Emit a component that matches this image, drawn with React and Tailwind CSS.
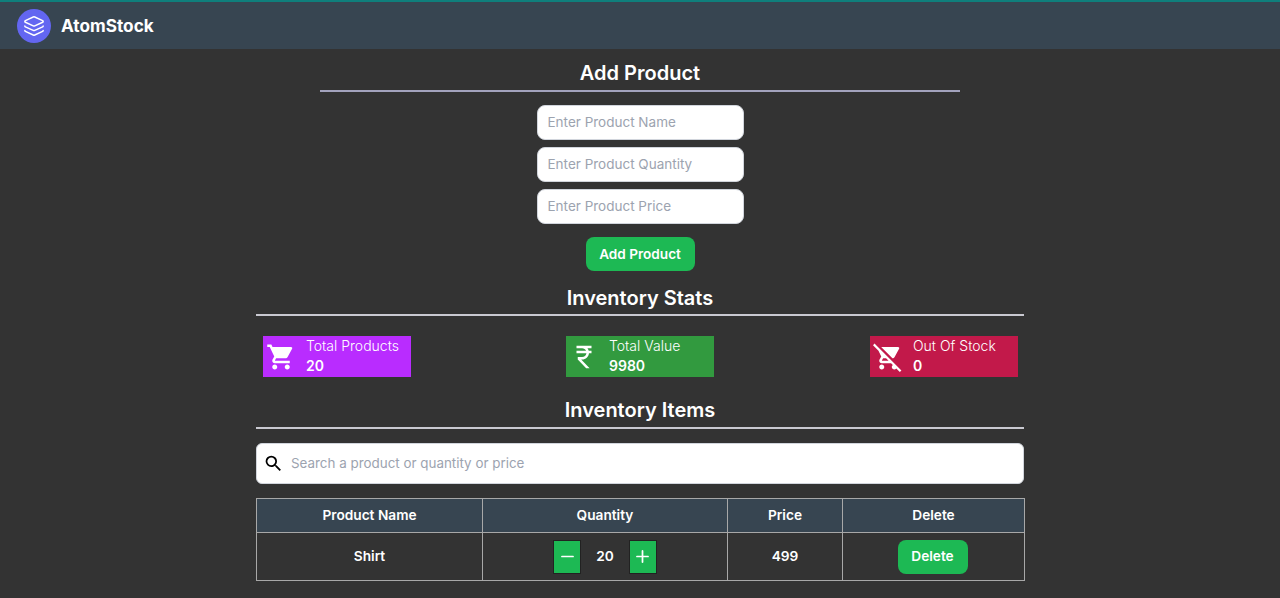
import { Layers, Minus, Plus } from 'lucide-react'
import { MdShoppingCart, MdRemoveShoppingCart, MdCurrencyRupee, MdSearch } from 'react-icons/md'

const stats = [
  { label: 'Total Products', value: '20', icon: MdShoppingCart, bg: 'bg-[#b92cff]' },
  { label: 'Total Value', value: '9980', icon: MdCurrencyRupee, bg: 'bg-[#329a3f] mr-px' },
  { label: 'Out Of Stock', value: '0', icon: MdRemoveShoppingCart, bg: 'bg-[#c2194a]' },
]

function Heading({ children, className }) {
  return (
    <h2 className={`text-center text-[20px] leading-[28px] font-semibold text-white ${className}`}>
      {children}
    </h2>
  )
}

function Field({ placeholder }) {
  return (
    <input
      placeholder={placeholder}
      className="w-[207px] h-[35px] rounded-lg bg-white border border-gray-300 px-[10px] pb-[2px] text-[13.5px] text-gray-900 placeholder:text-[#9ca3af] outline-none"
    />
  )
}

export default function App() {
  return (
    <div className="min-h-[598px] bg-[#333333] font-['Inter',sans-serif] text-white">
      <header className="h-[49px] bg-[#374551] border-t-2 border-[#0f7f7c] flex items-center pl-[17px] gap-[10px]">
        <div className="w-[34px] h-[34px] rounded-full bg-[#6366f1] flex items-center justify-center">
          <Layers size={22} strokeWidth={1.6} className="text-white" />
        </div>
        <span className="text-[17.2px] font-bold pt-px">AtomStock</span>
      </header>

      <main className="w-[768px] mx-auto">
        <Heading className="mt-[10px]">Add Product</Heading>
        <div className="w-[640px] h-[2px] bg-[#a3a3bd] mx-auto mt-[3px]" />

        <div className="flex flex-col items-center gap-[7px] mt-[13px]">
          <Field placeholder="Enter Product Name" />
          <Field placeholder="Enter Product Quantity" />
          <Field placeholder="Enter Product Price" />
        </div>
        <div className="flex justify-center mt-[13px]">
          <button className="w-[109px] h-[34px] rounded-lg bg-[#1db954] text-[13.6px] font-semibold text-white">
            Add Product
          </button>
        </div>

        <Heading className="mt-[13px]">Inventory Stats</Heading>
        <div className="h-[2px] bg-[#c9c9d1] mt-[2px]" />

        <div className="flex justify-between pl-[7px] pr-[6px] mt-[20px]">
          {stats.map(s => {
            const Icon = s.icon
            return (
              <div key={s.label} className={`w-[148px] h-[41px] flex items-center ${s.bg}`}>
                <Icon size={30} className="ml-[3px] shrink-0 text-white" />
                <div className="ml-[10px] flex flex-col pb-[2px]">
                  <span className="text-sm leading-[20px] font-light">{s.label}</span>
                  <span className="text-sm leading-[20px] font-semibold">{s.value}</span>
                </div>
              </div>
            )
          })}
        </div>

        <Heading className="mt-[19px]">Inventory Items</Heading>
        <div className="h-[2px] bg-[#c9c9d1] mt-[3px]" />

        <div className="mt-[14px] h-[41px] rounded-md bg-white border border-gray-300 flex items-center pl-[6px]">
          <MdSearch size={21} className="text-black shrink-0" />
          <input
            placeholder="Search a product or quantity or price"
            className="ml-[7px] flex-1 text-[13.4px] text-gray-900 placeholder:text-[#9ca3af] outline-none bg-transparent"
          />
        </div>

        <table className="mt-[14px] w-full border-collapse table-fixed text-[13.7px] font-semibold text-center">
          <colgroup>
            <col className="w-[226px]" />
            <col className="w-[245px]" />
            <col className="w-[115px]" />
            <col className="w-[182px]" />
          </colgroup>
          <thead>
            <tr className="h-[34px] bg-[#374551]">
              <th className="border border-[#a8a8a8] font-semibold">Product Name</th>
              <th className="border border-[#a8a8a8] font-semibold">Quantity</th>
              <th className="border border-[#a8a8a8] font-semibold">Price</th>
              <th className="border border-[#a8a8a8] font-semibold">Delete</th>
            </tr>
          </thead>
          <tbody>
            <tr className="h-[48px]">
              <td className="border border-[#a8a8a8]">Shirt</td>
              <td className="border border-[#a8a8a8]">
                <div className="flex items-center justify-center gap-[15px]">
                  <button className="w-[28px] h-[34px] bg-[#1db954] border border-[#222] flex items-center justify-center">
                    <Minus size={19} strokeWidth={2.2} />
                  </button>
                  <span>20</span>
                  <button className="w-[28px] h-[34px] bg-[#1db954] border border-[#222] flex items-center justify-center">
                    <Plus size={19} strokeWidth={2.2} />
                  </button>
                </div>
              </td>
              <td className="border border-[#a8a8a8]">499</td>
              <td className="border border-[#a8a8a8]">
                <button className="w-[70px] h-[34px] mr-[2px] rounded-lg bg-[#1db954] font-semibold">Delete</button>
              </td>
            </tr>
          </tbody>
        </table>
      </main>
    </div>
  )
}
